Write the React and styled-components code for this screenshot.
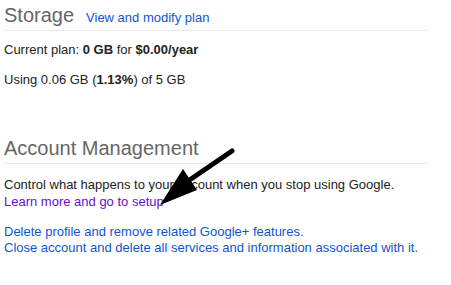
import React from 'react';
import styled, { createGlobalStyle } from 'styled-components';

const GlobalStyle = createGlobalStyle`
  html, body {
    margin: 0;
    padding: 0;
    background: #fff;
  }
  body {
    font-family: "Liberation Sans", Arial, sans-serif;
    font-size: 13px;
    color: #222;
  }
`;

const StyledPage = styled.div`
  position: relative;
  width: 451px;
  height: 285px;
  padding: 3px 0 0 4px;
  box-sizing: border-box;
  overflow: hidden;
`;

const StyledSection = styled.section`
  width: 424px;
  margin-top: ${({ top }) => top}px;
`;

const StyledHeadRow = styled.div`
  display: flex;
  align-items: baseline;
  gap: 12px;
  padding-bottom: 3px;
  border-bottom: 1px solid #e8e8e8;
`;

const StyledTitle = styled.h2`
  margin: 0;
  font-size: 20px;
  line-height: 24px;
  font-weight: normal;
  color: #666;
`;

const StyledLink = styled.a`
  color: ${({ visited }) => (visited ? '#6611cc' : '#1155cc')};
  text-decoration: none;
  cursor: pointer;
`;

const StyledBlock = styled.div`
  margin-top: ${({ top }) => top}px;
  line-height: ${({ lh }) => lh || 16}px;
`;

const StyledLine = styled.div`
  & + & {
    margin-top: ${({ gap }) => gap || 0}px;
  }
`;

const StyledArrow = styled.svg`
  position: absolute;
  left: 0;
  top: 0;
  pointer-events: none;
`;

// hand-drawn annotation pointing at the setup link
const Arrow = () => (
  <StyledArrow width="451" height="285" viewBox="0 0 451 285">
    <line x1="232" y1="151" x2="191" y2="179" stroke="#000" strokeWidth="5" strokeLinecap="round" />
    <polygon points="160,205 183,169 197,190" fill="#000" />
  </StyledArrow>
);

const App = () => (
  <>
    <GlobalStyle />
    <StyledPage>
      <StyledSection top={0}>
        <StyledHeadRow>
          <StyledTitle>Storage</StyledTitle>
          <StyledLink>View and modify plan</StyledLink>
        </StyledHeadRow>
        <StyledBlock top={11}>
          <StyledLine>
            Current plan: <b>0 GB</b> for <b>$0.00/year</b>
          </StyledLine>
          <StyledLine gap={14}>
            Using 0.06 GB (<b>1.13%</b>) of 5 GB
          </StyledLine>
        </StyledBlock>
      </StyledSection>

      <StyledSection top={48}>
        <StyledHeadRow>
          <StyledTitle>Account Management</StyledTitle>
        </StyledHeadRow>
        <StyledBlock top={12} lh={17}>
          <div>Control what happens to your account when you stop using Google.</div>
          <div>
            <StyledLink visited>Learn more and go to setup</StyledLink>
          </div>
        </StyledBlock>
        <StyledBlock top={14} lh={16}>
          <div>
            <StyledLink>Delete profile and remove related Google+ features.</StyledLink>
          </div>
          <div>
            <StyledLink>Close account and delete all services and information associated with it.</StyledLink>
          </div>
        </StyledBlock>
      </StyledSection>

      <Arrow />
    </StyledPage>
  </>
);

export default App;
